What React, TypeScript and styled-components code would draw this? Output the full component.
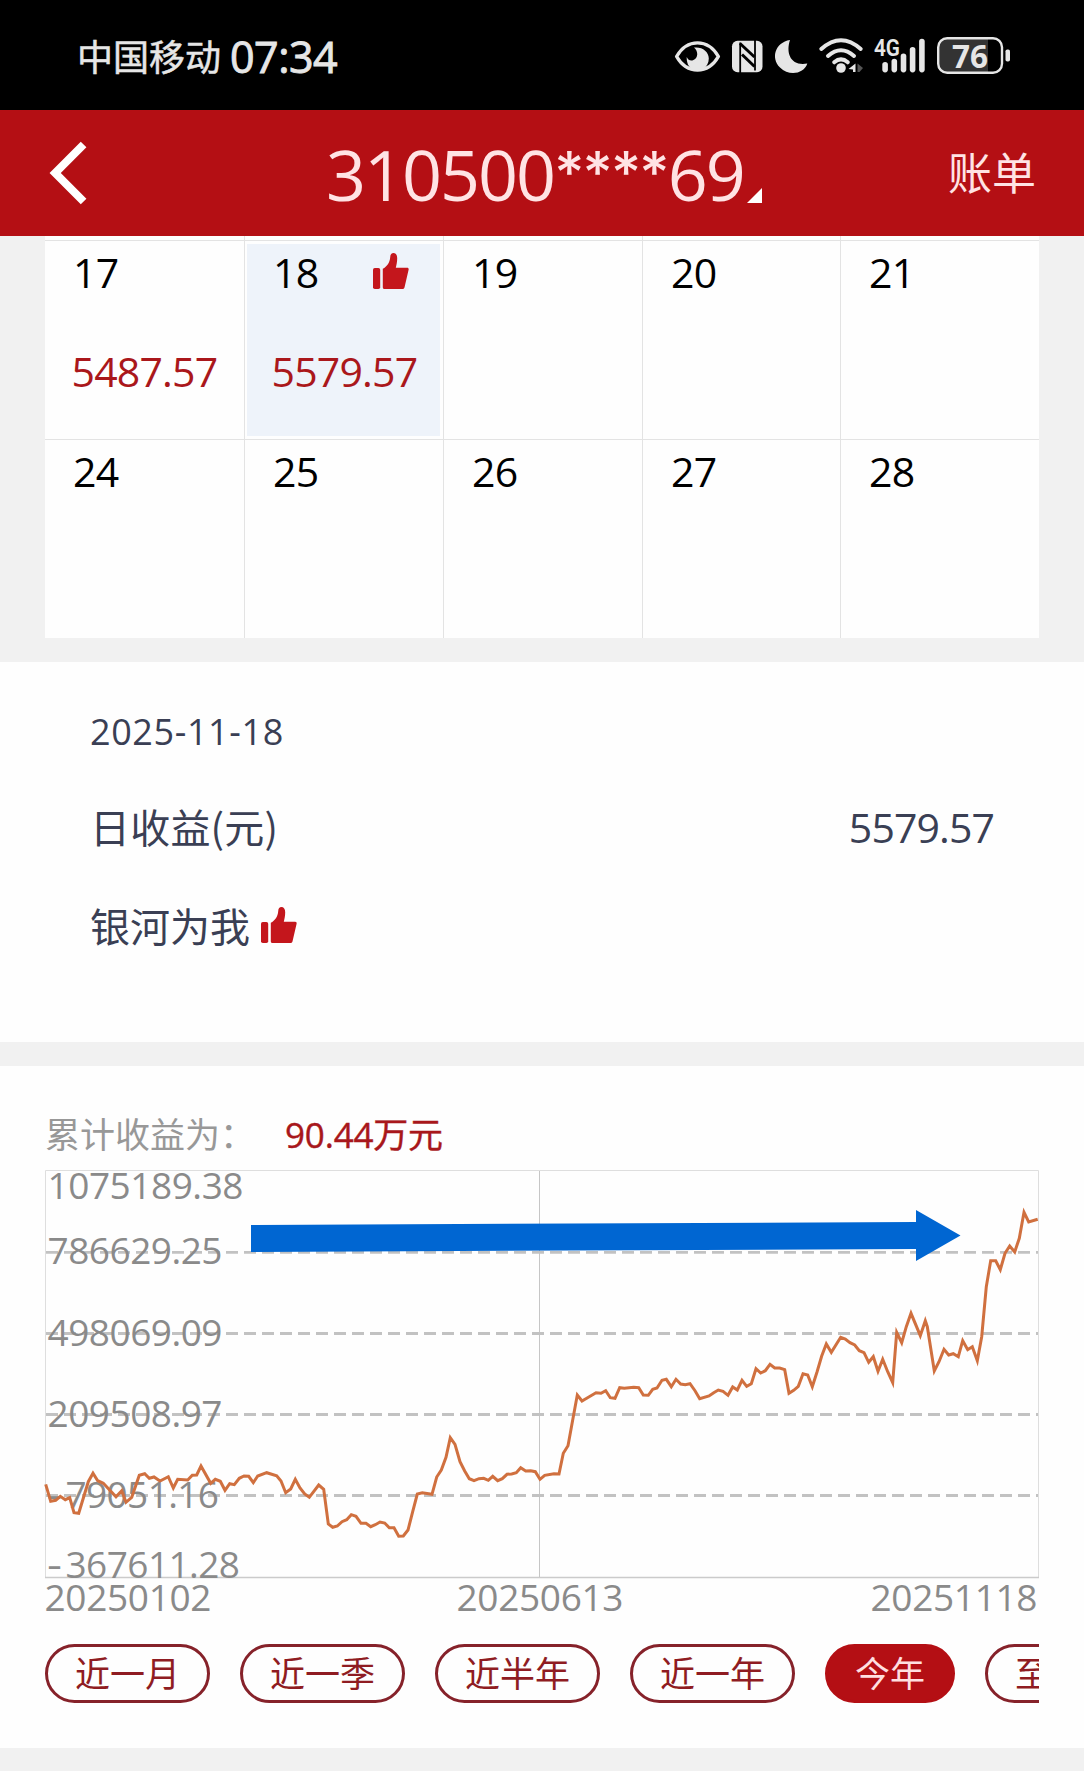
import React from 'react';
import styled, { createGlobalStyle } from 'styled-components';

const LATIN = "'Open Sans', 'Noto Sans CJK SC', sans-serif";
const HAN = "'Noto Sans CJK SC', 'Open Sans', sans-serif";

const GlobalStyle = createGlobalStyle`
  * { box-sizing: border-box; }
  body { margin: 0; background: #f1f1f1; font-family: ${LATIN}; }
`;

const Screen = styled.div`
  width: 1084px;
  height: 1771px;
  overflow: hidden;
  display: flex;
  flex-direction: column;
  background: #f1f1f1;
`;

/* ---------- status bar ---------- */

const StatusBar = styled.div`
  height: 110px;
  flex: none;
  padding: 0 73px 0 77px;
  display: flex;
  justify-content: space-between;
  background: #000;
  color: #e6e6e6;
`;

const StatusLeft = styled.div`
  display: flex;
  align-items: baseline;
  gap: 9px;
  padding-top: 27px;
  line-height: 60px;
`;

const Carrier = styled.span`
  font-family: ${HAN};
  font-size: 36px;
  -webkit-text-stroke: 0.5px currentColor;
  position: relative;
  top: -2px;
`;

const Clock = styled.span`
  font-size: 43px;
  font-weight: 500;
  -webkit-text-stroke: 0.9px currentColor;
  letter-spacing: -0.5px;
`;

const StatusIcons = styled.div`
  display: flex;
  align-items: flex-start;
  padding-top: 26px;
  svg { display: block; }
`;

/* ---------- header ---------- */

const Header = styled.header`
  height: 126px;
  flex: none;
  padding: 0 48px 0 49px;
  display: grid;
  grid-template-columns: 200px 1fr 200px;
  align-items: center;
  background: #b40f14;
  color: #ffe3e4;
`;

const BackButton = styled.button`
  border: 0;
  padding: 0;
  width: 40px;
  height: 64px;
  background: none;
  svg { display: block; }
`;

const Account = styled.div`
  display: flex;
  align-items: baseline;
  padding-left: 77px;
  font-size: 70px;
  line-height: 100px;
  letter-spacing: -2px;
  white-space: nowrap;
  margin-top: 1px;
`;

const Mask = styled.span`
  font-family: Inter, sans-serif;
  font-size: 58px;
  font-weight: 500;
  line-height: 60px;
  letter-spacing: -1.8px;
  align-self: flex-start;
  margin: 18px 0 0 0;
`;

const Corner = styled.svg`
  margin-left: 3px;
  position: relative;
  top: 2px;
`;

const Bill = styled.div`
  justify-self: end;
  font-family: ${HAN};
  font-size: 44px;
  line-height: 60px;
  margin-top: -5px;
`;

/* ---------- calendar ---------- */

const Calendar = styled.section`
  flex: none;
  margin: 0 45px 24px;
  display: grid;
  grid-template-columns: 200px 199px 199px 198px 198px;
  grid-template-rows: 5px 199px 198px;
  background: #fefefe;
`;

const Cell = styled.div<{ $last?: boolean; $bottom?: boolean; $stub?: boolean }>`
  border-right: ${p => (p.$last ? 0 : 1)}px solid #e3e3e3;
  border-bottom: ${p => (p.$bottom ? 0 : 1)}px solid #e3e3e3;
  padding: ${p => (p.$stub ? '0' : '3px 3px 3px 2px')};
`;

const Day = styled.div<{ $selected?: boolean }>`
  height: 192px;
  padding-left: 26px;
  background: ${p => (p.$selected ? '#eef3fa' : 'transparent')};
  color: #000;
`;

const DayTop = styled.div`
  display: flex;
  align-items: flex-start;
  justify-content: space-between;
  height: 56px;
  padding-right: 31px;
  font-size: 41px;
  letter-spacing: -0.6px;
  line-height: 56px;
  svg { margin-top: 9px; }
`;

const Amount = styled.div`
  margin: 43px 0 0 -1.5px;
  font-size: 41px;
  line-height: 56px;
  letter-spacing: -0.8px;
  color: #aa171b;
`;

/* ---------- day detail ---------- */

const Detail = styled.section`
  flex: none;
  height: 380px;
  margin-bottom: 24px;
  padding: 45px 90px 0;
  background: #fefefe;
  color: #3a3f54;
`;

const DateLine = styled.div`
  font-size: 36px;
  line-height: 50px;
  letter-spacing: 0.6px;
`;

const DetailRow = styled.div`
  margin-top: 39px;
  display: flex;
  justify-content: space-between;
  align-items: baseline;
  line-height: 60px;
  font-size: 41px;
  letter-spacing: -0.9px;
`;

const DetailLabel = styled.span`
  font-family: ${HAN};
  font-size: 40px;
  letter-spacing: 0.2px;
`;

const Praise = styled.div`
  margin-top: 38px;
  display: flex;
  align-items: center;
  gap: 11px;
  font-family: ${HAN};
  font-size: 40px;
  line-height: 60px;
`;

/* ---------- chart ---------- */

const ChartPanel = styled.section`
  flex: none;
  height: 682px;
  padding: 37px 45px 0;
  background: #fefefe;
`;

const Total = styled.div`
  display: flex;
  align-items: baseline;
  height: 60px;
  line-height: 60px;
  font-family: ${HAN};
  font-size: 35px;
  color: #989898;
`;

const TotalValue = styled.span`
  margin-left: 30px;
  font-family: ${LATIN};
  -webkit-text-stroke: 0.4px currentColor;
  letter-spacing: -0.2px;
  color: #a8171b;
`;

const Chart = styled.svg`
  display: block;
  overflow: visible;
  font-family: ${LATIN};
  font-size: 37px;
  fill: #8a8a8a;
`;

const Ranges = styled.div`
  display: flex;
  gap: 30px;
  margin-top: 21px;
  overflow: hidden;
`;

const Range = styled.button<{ $active?: boolean }>`
  flex: none;
  height: 59px;
  padding: 0 27px 4px;
  border: 3px solid ${p => (p.$active ? '#b40f14' : '#86222a')};
  border-radius: 30px;
  background: ${p => (p.$active ? '#b40f14' : '#fefefe')};
  color: ${p => (p.$active ? '#ffdfe0' : '#8f1c22')};
  font-family: ${HAN};
  font-size: 35px;
  line-height: 49px;
  white-space: nowrap;
`;

/* ---------- icons ---------- */

const Thumb = () => (
  <svg width="36" height="36" viewBox="0 0 36 36" fill="#c4161c">
    <rect x="0" y="15" width="7.2" height="21" rx="1.8" />
    <path d="M9.8 15.8C14 13.5 16.8 9.5 17.2 4.2C17.3 1.4 18.6 0 20.4 0C22.8 0 24.2 2 24.2 5.2C24.2 9 23.4 12 22.8 14.8H34.2C35.3 14.8 35.9 15.6 35.6 16.8L31.6 34C31.3 35.4 30.6 36 29.4 36H11.6C10.4 36 9.8 35.4 9.8 34.2Z" />
  </svg>
);

const StatusGlyphs = () => (
  <svg width="338" height="60" viewBox="673 26 338 60" fill="#e6e6e6" overflow="visible">
    {/* eye */}
    <path d="M676.6 56.5C687 38.3 708 38.3 718.4 56.5C708 74.7 687 74.7 676.6 56.5Z" fill="none" stroke="#e6e6e6" strokeWidth="3.4" strokeLinejoin="round" />
    <path d="M694 47.6C702 46.500 708.800 51.500 708.800 58.500C708.800 63 706.500 66.500 703.500 69H691.500C688.500 66.500 686.500 62.500 686.700 57C688 60 690.500 61.200 693 60.300C698.500 58.300 698.500 51.500 694 47.600Z" />
    {/* nfc */}
    <rect x="732" y="40.8" width="30.5" height="31.4" rx="5.5" />
    <g stroke="#000" fill="none">
      <path d="M740.200 42.500V73" strokeWidth="1.800" />
      <path d="M755 40V70.500" strokeWidth="1.800" />
      <path d="M740 43.500L754.500 57" strokeWidth="3" />
      <path d="M742 54.500L754.500 66.500" strokeWidth="3" />
    </g>
    {/* moon */}
    <path d="M790 40C775 42.500 770.500 58 780 67.500C789 76.500 804 74 807.300 63.500C791 66.500 785.500 53.500 790 40Z" />
    {/* wifi */}
    <g fill="none" stroke="#e6e6e6" strokeWidth="4" strokeLinecap="round">
      <path d="M821.3 49Q841 31.500 860.700 49" />
      <path d="M828 56Q841 44.500 854 56" />
      <path d="M834.200 62.300Q841 56.500 847.800 62.300" />
    </g>
    <circle cx="841" cy="68" r="4.8" />
    <path d="M855.500 63.500V72H853V69.500L848.500 69Z" />
    <path d="M857.500 63.500L863 68L859.500 72H857.500Z" fill="#555" />
    {/* mobile signal */}
    <text x="874" y="55.500" fontSize="23" fontWeight="600" fontFamily="Roboto" textLength="26" lengthAdjust="spacingAndGlyphs">4G</text>
    <rect x="882.300" y="62" width="5.600" height="10.400" rx="2.800" />
    <rect x="891.500" y="58.800" width="5.600" height="13.600" rx="2.800" />
    <rect x="900.700" y="53.600" width="5.600" height="18.800" rx="2.800" />
    <rect x="909.800" y="47" width="5.600" height="25.400" rx="2.800" />
    <rect x="919.100" y="38.700" width="5.600" height="33.700" rx="2.800" />
    {/* battery */}
    <path d="M946 39H988V72H946Q939 72 939 64V47Q939 39 946 39Z" fill="#333" />
    <rect x="938.200" y="38.200" width="63.800" height="34.600" rx="9" fill="none" stroke="#e6e6e6" strokeWidth="2.400" />
    <rect x="1005.500" y="49.500" width="4.500" height="12" rx="1.800" />
    <text x="952" y="67.500" fontSize="32" fontWeight="700" fontFamily="Open Sans" textLength="36" lengthAdjust="spacingAndGlyphs">76</text>
  </svg>
);

/* ---------- data ---------- */

type Pt = [number, number];

/* Samples are kept in thirds of a pixel, relative to the origin of their segment. */
const segments: { x: number; y: number; pts: Pt[] }[] = [
  { x: 0, y: 1370, pts: [[137,343],[152,394],[167,391],[181,379],[196,389],[209,383],[222,428],[236,430],[265,335],[279,310],[293,332],[310,340],[348,380],[365,362],[378,397],[395,382],[418,316],[434,311],[448,325],[462,321],[480,333],[505,320],[520,354],[533,328],[563,330],[577,316],[590,315],[603,288],[632,340],[646,328],[661,334],[675,361],[689,341],[703,344],[718,325],[732,318],[746,319],[760,338],[773,318],[800,308],[830,317]] },
  { x: 280, y: 1330, pts: [[3,453],[17,488],[32,477],[46,448],[60,474],[74,492],[88,502],[116,465],[131,478],[145,582],[158,592],[172,588],[186,575],[200,569],[214,554],[228,559],[243,580],[258,580],[272,590],[286,584],[300,576],[314,579],[328,593],[342,593],[356,619],[370,618],[384,600],[398,545],[412,492],[427,488],[456,493],[470,441],[484,420],[498,382],[511,323],[525,343],[540,395],[554,423],[568,446],[582,452],[597,446],[611,445],[625,451],[638,439],[653,452],[667,446],[681,433],[695,432],[709,428],[722,413],[737,423],[752,422],[766,425],[780,448],[794,436],[822,431],[837,432],[850,370],[864,347],[878,270],[892,195],[906,213],[920,205]] },
  { x: 560, y: 1290, pts: [[108,308],[123,310],[137,302],[151,323],[165,325],[179,293],[193,295],[221,292],[236,293],[250,315],[265,316],[278,298],[291,294],[306,271],[319,268],[334,290],[348,268],[362,282],[376,284],[390,281],[405,302],[419,326],[447,318],[461,308],[475,300],[489,304],[504,316],[518,291],[532,300],[546,271],[560,289],[574,281],[588,236],[602,249],[616,242],[630,223],[644,234],[659,234],[674,239],[687,310],[701,301],[715,289],[729,251],[743,255],[757,290],[771,246],[785,198]] },
  { x: 820, y: 1180, pts: [[19,492],[34,517],[62,472],[76,477],[90,488],[104,495],[118,512],[132,518],[146,547],[160,530],[174,574],[188,538],[203,575],[218,608],[230,457],[245,488],[259,440],[273,400],[301,467],[316,422],[322,440],[343,573],[357,545],[372,508],[386,525],[400,521],[415,530],[428,482],[443,509],[457,500],[472,542],[485,470],[499,320],[512,242],[527,242],[541,269],[555,220],[569,198],[584,216],[598,175],[612,97],[626,126],[653,118]] },
];

const line = segments
  .flatMap(s => s.pts.map(([x, y]) => `${(s.x + x / 3).toFixed(1)},${(s.y + y / 3).toFixed(1)}`))
  .join(' ');

const yLabels: { value: string; y: number; w: number; negative?: boolean }[] = [
  { value: '1075189.38', y: 1198.6, w: 196 },
  { value: '786629.25', y: 1264.2, w: 175 },
  { value: '498069.09', y: 1346.2, w: 175 },
  { value: '209508.97', y: 1427.4, w: 175 },
  { value: '79051.16', y: 1508.4, w: 153.5, negative: true },
  { value: '367611.28', y: 1578.4, w: 174.5, negative: true },
];

const xLabels = [
  { text: '20250102', x: 44.5 },
  { text: '20250613', x: 456.5 },
  { text: '20251118', x: 870.5 },
];

const weeks = [
  [{ d: '17', v: '5487.57' }, { d: '18', v: '5579.57', on: true }, { d: '19' }, { d: '20' }, { d: '21' }],
  [{ d: '24' }, { d: '25' }, { d: '26' }, { d: '27' }, { d: '28' }],
] as { d: string; v?: string; on?: boolean }[][];

const ranges = ['近一月', '近一季', '近半年', '近一年', '今年', '至今'];

export default function App() {
  return (
    <Screen>
      <GlobalStyle />
      <StatusBar>
        <StatusLeft>
          <Carrier>中国移动</Carrier>
          <Clock>07:34</Clock>
        </StatusLeft>
        <StatusIcons><StatusGlyphs /></StatusIcons>
      </StatusBar>

      <Header>
        <BackButton aria-label="back">
          <svg width="40" height="64" viewBox="49 141 40 64">
            <path d="M83.600 144.500L55.200 173L83.600 201.500" fill="none" stroke="#fff" strokeWidth="8" />
          </svg>
        </BackButton>
        <Account>
          310500<Mask>****</Mask>69
          <Corner width="15" height="15" viewBox="0 0 15 15"><path d="M15 0V15H0Z" fill="#fff" /></Corner>
        </Account>
        <Bill>账单</Bill>
      </Header>

      <Calendar>
        {[0, 1, 2, 3, 4].map(i => <Cell key={i} $stub $last={i === 4} />)}
        {weeks.map((week, r) =>
          week.map((c, i) => (
            <Cell key={c.d} $last={i === 4} $bottom={r === 1}>
              <Day $selected={c.on}>
                <DayTop>{c.d}{c.on && <Thumb />}</DayTop>
                {c.v && <Amount>{c.v}</Amount>}
              </Day>
            </Cell>
          ))
        )}
      </Calendar>

      <Detail>
        <DateLine>2025-11-18</DateLine>
        <DetailRow><DetailLabel>日收益(元)</DetailLabel><span>5579.57</span></DetailRow>
        <Praise>银河为我<Thumb /></Praise>
      </Detail>

      <ChartPanel>
        <Total>累计收益为：<TotalValue>90.44万元</TotalValue></Total>
        <Chart width="994" height="460" viewBox="45 1163 994 460">
          <path d="M45.500 1577V1170.500H1038.500V1577" fill="none" stroke="#dedede" />
          <path d="M45 1577.500H1039" stroke="#cbcbcb" strokeWidth="1.400" />
          <path d="M539.500 1171V1577" stroke="#c6c6c6" />
          {[1252.3, 1333.5, 1414.5, 1495.5].map(y => (
            <path key={y} d={`M46 ${y}H1038`} stroke="#c2c2c2" strokeWidth="2.800" strokeDasharray="12 6" />
          ))}
          {yLabels.map(l => (
            <text key={l.value} y={l.y}>
              {l.negative && <tspan x="47" textLength="15" lengthAdjust="spacingAndGlyphs">-</tspan>}
              <tspan x={l.negative ? 65.5 : 47.5} textLength={l.w} lengthAdjust="spacing">{l.value}</tspan>
            </text>
          ))}
          {xLabels.map(l => (
            <text key={l.text} x={l.x} y="1611.400" textLength="167" lengthAdjust="spacing">{l.text}</text>
          ))}
          <polyline points={line} fill="none" stroke="#d0703f" strokeWidth="3" strokeLinejoin="miter" />
          <path d="M251 1225L916 1222V1210L960.500 1235.500L916 1261V1249L251 1252Z" fill="#0066d2" />
        </Chart>
        <Ranges>
          {ranges.map(r => <Range key={r} $active={r === '今年'}>{r}</Range>)}
        </Ranges>
      </ChartPanel>
    </Screen>
  );
}
